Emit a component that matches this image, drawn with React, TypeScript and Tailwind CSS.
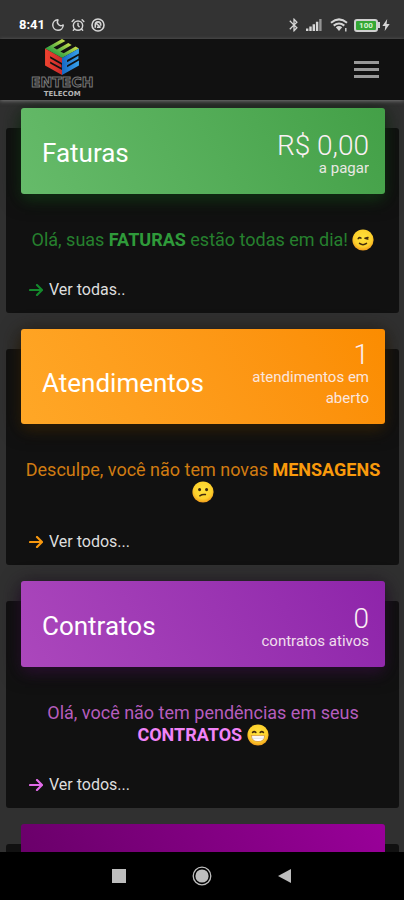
import type { ReactNode } from "react";
import { AlarmClock, Moon } from "lucide-react";
import { MdBluetooth } from "react-icons/md";
import clsx from "clsx";

type Mood = "wink" | "frown" | "grin";

interface CardData {
  id: string;
  title: string;
  value: string;
  caption: string;
  message: ReactNode;
  mood: Mood;
  link: string;
  header: string;
  text: string;
  arrow: string;
}

const CARDS: CardData[] = [
  {
    id: "faturas",
    title: "Faturas",
    value: "R$ 0,00",
    caption: "a pagar",
    message: (
      <>
        Olá, suas <b className="font-bold text-[#2f9a3a]">FATURAS</b> estão todas em dia!
      </>
    ),
    mood: "wink",
    link: "Ver todas..",
    header: "from-[#66bb6a] to-[#43a047] shadow-[0_4px_20px_#0c1f0d,0_7px_12px_-4px_#1c4a1f]",
    text: "text-[#26802e]",
    arrow: "text-[#14892c]",
  },
  {
    id: "atendimentos",
    title: "Atendimentos",
    value: "1",
    caption: "atendimentos em aberto",
    message: (
      <>
        Desculpe, você não tem novas <b className="font-bold text-[#f99a0c]">MENSAGENS</b>
      </>
    ),
    mood: "frown",
    link: "Ver todos...",
    header: "from-[#ffa726] to-[#fb8c00] shadow-[0_4px_20px_#1d1508,0_7px_12px_-4px_#4a3008]",
    text: "text-[#d07c12]",
    arrow: "text-[#f8980f]",
  },
  {
    id: "contratos",
    title: "Contratos",
    value: "0",
    caption: "contratos ativos",
    message: (
      <>
        Olá, você não tem pendências em seus <b className="font-bold text-[#f183f7]">CONTRATOS</b>
      </>
    ),
    mood: "grin",
    link: "Ver todos...",
    header: "from-[#ab47bc] to-[#8e24aa] shadow-[0_4px_20px_#1a0c1d,0_7px_12px_-4px_#3d1646]",
    text: "text-[#b65dbe]",
    arrow: "text-[#e16be8]",
  },
];

function Emoji({ mood }: { mood: Mood }) {
  return (
    <svg viewBox="0 0 22 22" className="inline-block size-[22px] align-[-5px]" role="img" aria-label={mood}>
      <defs>
        <radialGradient id={`face-${mood}`} cx="50%" cy="40%" r="60%">
          <stop offset="0" stopColor="#ffe23d" />
          <stop offset="0.7" stopColor="#fdd02b" />
          <stop offset="1" stopColor="#f09a1d" />
        </radialGradient>
      </defs>
      <circle cx="11" cy="11" r="10.6" fill={`url(#face-${mood})`} />
      {mood === "wink" && (
        <g fill="none" stroke="#422b0d" strokeWidth="1.5" strokeLinecap="round">
          <path d="M6.2 9.6q1.2-1.6 2.8-.5M13 9.2l3-.8M13 9.2l2.8.8M7.5 14.4q3.5 2.6 7 0" />
        </g>
      )}
      {mood === "frown" && (
        <g fill="none" stroke="#422b0d" strokeWidth="1.5" strokeLinecap="round">
          <circle cx="7.6" cy="8.6" r="0.8" fill="#422b0d" />
          <circle cx="14.6" cy="8.6" r="0.8" fill="#422b0d" />
          <path d="M7.8 14.8q2.6-1.8 5.6-1.2" />
        </g>
      )}
      {mood === "grin" && (
        <g fill="none" stroke="#422b0d" strokeWidth="1.5" strokeLinecap="round">
          <path d="M5.6 8.4q1.6-1.5 3.2 0M13.2 8.4q1.6-1.5 3.2 0" />
          <path d="M4.4 11.6h13.2q0 6-6.6 6t-6.6-6z" fill="#fff" stroke="#d8963a" strokeWidth="0.8" />
          <path d="M5 14.2h12" stroke="#c9c9c9" strokeWidth="0.6" />
        </g>
      )}
    </svg>
  );
}

function Logo() {
  const face = "M0 0H10V2.9H3V4.1H9.7V5.9H3V7.1H10V10H0Z";

  return (
    <a href="#" className="flex flex-col items-center" aria-label="Entech Telecom">
      <svg viewBox="0 0 32 34" className="h-9 w-[34px]">
        <defs>
          <linearGradient id="logo-top">
            <stop offset="0" stopColor="#2fa043" />
            <stop offset="1" stopColor="#c5dc4a" />
          </linearGradient>
          <linearGradient id="logo-left">
            <stop offset="0" stopColor="#f0432f" />
            <stop offset="1" stopColor="#c92a2c" />
          </linearGradient>
          <linearGradient id="logo-right">
            <stop offset="0" stopColor="#1767c4" />
            <stop offset="1" stopColor="#38a3ec" />
          </linearGradient>
        </defs>
        <path d="M0 0H10V2H3V4H9.7V6H3V8H10V10H0Z" transform="matrix(1.6 -.9 1.6 .9 0 9)" fill="url(#logo-top)" />
        <path d={face} transform="matrix(1.6 .9 0 1.6 0 9)" fill="url(#logo-left)" />
        <path d={face} transform="matrix(1.6 -.9 0 1.6 16 18)" fill="url(#logo-right)" />
      </svg>
      <span className="font-['DejaVu_Sans'] text-[14px]/[15px] font-bold text-[#111] [-webkit-text-stroke:1px_#777]">
        ENTECH
      </span>
      <span className="font-['DejaVu_Sans'] text-[7px]/[8px] font-bold text-[#b4b4b4]">TELECOM</span>
    </a>
  );
}

function StatusBar() {
  return (
    <div className="flex h-[39px] shrink-0 items-end justify-between bg-[#333] pr-3.5 pb-1.5 pl-[19px] text-[#d6d6d6]">
      <div className="flex h-4 items-center gap-1.5">
        <span className="text-[13px]/[16px] font-bold text-white">8:41</span>
        <Moon className="size-3.5" strokeWidth={2.5} />
        <AlarmClock className="size-3.5" strokeWidth={2.5} />
        <svg viewBox="0 0 14 14" className="size-3.5" fill="none" stroke="currentColor" strokeWidth="1.6">
          <circle cx="7" cy="7" r="6" />
          <path d="M4.3 9.8V6.6a2.7 2.7 0 0 1 5.4 0v1.2M4.3 4.3l5.2 5.2M6 9.3h3.6" />
        </svg>
      </div>
      <div className="flex h-4 items-center gap-1">
        <MdBluetooth className="size-4" />
        <svg viewBox="0 0 16 12" className="h-3 w-4" fill="currentColor">
          <path d="M0 9.5h2.4V12H0zM3.3 7.5h2.4V12H3.3zM6.6 5.2H9V12H6.6zM9.9 2.8h2.4V12H9.9z" />
          <path d="M13.2 0h2.4v12h-2.4z" opacity="0.6" />
        </svg>
        <svg viewBox="0 0 18 14" className="ml-1 h-3.5 w-[18px]" fill="none" stroke="currentColor" strokeWidth="2">
          <path d="M1 4.7q8-6.6 16 0M3.7 7.6q5.3-4.3 10.6 0" />
          <path d="M5.8 9.3q3.2-2.4 6.4 0L9 13z" fill="currentColor" stroke="none" />
          <path d="M15.8 10v3.5" strokeWidth="1.4" />
        </svg>
        <div className="ml-0.5 flex items-center">
          <span className="flex h-[13px] w-6 items-center justify-center rounded-[3px] border-2 border-[#d0d0d0] bg-[#35a735] text-[8px]/[9px] font-bold text-[#d8f5d3]">
            100
          </span>
          <span className="h-1.5 w-0.5 bg-[#d0d0d0]" />
          <svg viewBox="0 0 8 12" className="ml-0.5 h-3 w-2" fill="currentColor">
            <path d="M5.2 0 .4 7h2.9L2.7 12 7.7 5H4.6z" />
          </svg>
        </div>
      </div>
    </div>
  );
}

function Card({ card }: { card: CardData }) {
  return (
    <section aria-labelledby={card.id} className="rounded-[3px] bg-[#111] pr-3.5 pb-3 pl-[15px]">
      <header
        className={clsx(
          "-mt-5 flex min-h-[86px] items-end justify-between rounded-[3px] bg-linear-60 pt-3.5 pr-4 pb-[15px] pl-[21px]",
          card.header,
        )}
      >
        <h2 id={card.id} className="mb-2.5 text-[26px]/[32px] text-white">
          {card.title}
        </h2>
        <p className="max-w-32 text-right font-light text-[#fbf0f4]">
          <span className="block text-[28px]/[24px]">{card.value}</span>
          <span className="block text-[15px]/[21px] font-normal opacity-90">{card.caption}</span>
        </p>
      </header>
      <p className={clsx("mt-[35px] text-center text-[18px]/[22px]", card.text)}>
        {card.message} <Emoji mood={card.mood} />
      </p>
      <a href={`#${card.id}`} className="mt-7 ml-2 flex w-fit items-center gap-1.5 text-[16px]/[22px] text-[#dedede]">
        <svg
          viewBox="0 0 14 12"
          className={clsx("h-3 w-3.5", card.arrow)}
          fill="none"
          stroke="currentColor"
          strokeWidth="2.2"
          strokeLinecap="round"
          strokeLinejoin="round"
        >
          <path d="M1 6h12M8 1l5 5-5 5" />
        </svg>
        {card.link}
      </a>
    </section>
  );
}

function NavigationBar() {
  return (
    <nav className="flex h-12 shrink-0 items-center justify-center gap-[63px] bg-black text-[#bdbdbd]">
      <button type="button" aria-label="Recentes" className="size-5 p-[3px]">
        <span className="block size-3.5 bg-current" />
      </button>
      <button type="button" aria-label="Início">
        <svg viewBox="0 0 20 20" className="size-5">
          <circle cx="10" cy="10" r="8.8" fill="none" stroke="currentColor" strokeWidth="1.3" />
          <circle cx="10" cy="10" r="6.6" fill="currentColor" />
        </svg>
      </button>
      <button type="button" aria-label="Voltar">
        <svg viewBox="0 0 20 20" className="size-5" fill="currentColor">
          <path d="M16 3v14L3 10z" />
        </svg>
      </button>
    </nav>
  );
}

export default function App() {
  return (
    <div className="flex h-screen flex-col overflow-hidden bg-[#303030] font-[Roboto,sans-serif]">
      <StatusBar />
      <header className="z-10 flex h-[61px] shrink-0 items-start justify-between bg-[#111] pr-[25px] pl-[31px] shadow-[0_1px_4px_#777]">
        <Logo />
        <button type="button" aria-label="Menu" className="mt-[22px] flex w-[25px] flex-col gap-1">
          <span className="h-[3px] bg-[#999]" />
          <span className="h-[3px] bg-[#999]" />
          <span className="h-[3px] bg-[#999]" />
        </button>
      </header>
      <main className="flex min-h-0 flex-1 flex-col gap-9 overflow-hidden pt-7 pr-[5px] pl-1.5 *:shrink-0">
        {CARDS.map((card) => (
          <Card key={card.id} card={card} />
        ))}
        <section className="rounded-[3px] bg-[#111] pr-3.5 pl-[15px]">
          <div className="-mt-5 h-[86px] rounded-[3px] bg-linear-60 from-[#660066] to-[#990099]" />
        </section>
      </main>
      <NavigationBar />
    </div>
  );
}
